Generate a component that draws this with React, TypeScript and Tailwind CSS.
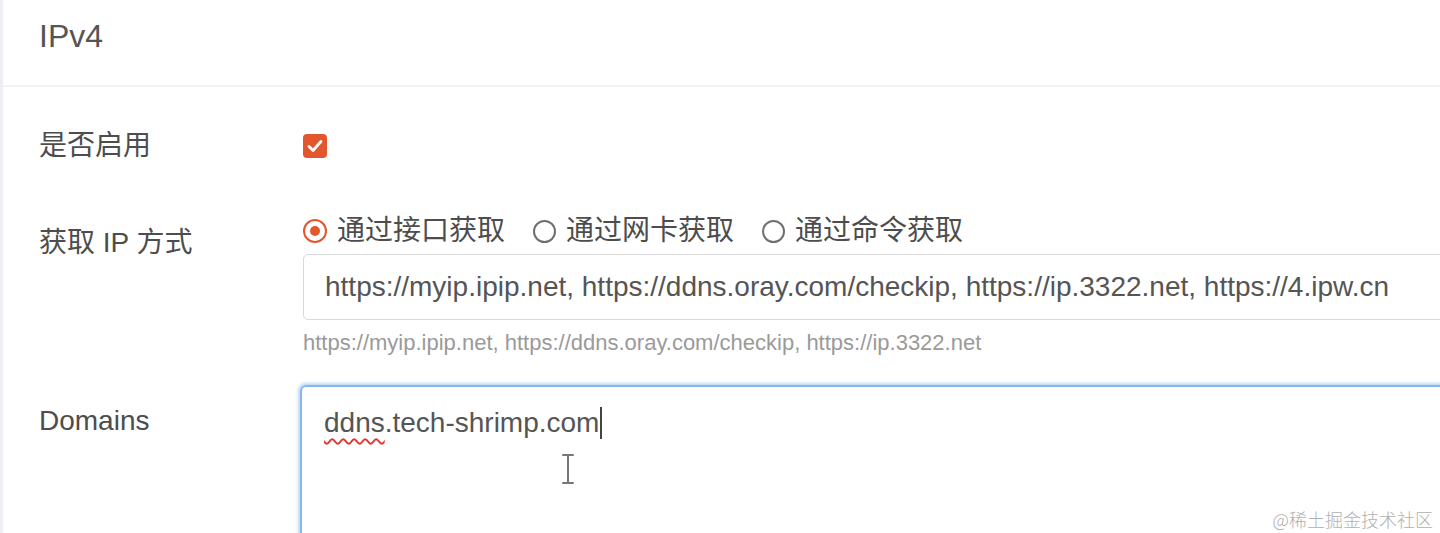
import React from 'react';

const font = { fontFamily: '"Liberation Sans", "Noto Sans CJK SC", sans-serif' };

function Radio({ checked, label }: { checked?: boolean; label: string }) {
  return (
    <label className="flex items-center gap-[10px]">
      {checked ? (
        <span className="w-[24px] h-[24px] rounded-full border-[2px] border-[#e4572e] flex items-center justify-center bg-white">
          <span className="w-[10px] h-[10px] rounded-full bg-[#e4572e]" />
        </span>
      ) : (
        <span className="w-[23px] h-[23px] rounded-full border-[2px] border-[#6f6f6f] bg-white" />
      )}
      <span className="text-[28px] leading-none text-[#4d4d4d]">{label}</span>
    </label>
  );
}

export default function App() {
  return (
    <div className="w-[1440px] h-[533px] overflow-hidden bg-white relative" style={font}>
      <div className="h-full border-l-[3px] border-[#eceef2]">
        {/* Header */}
        <div className="h-[87px] flex items-center pl-[36px] border-b-[2px] border-[#f2f3f5]">
          <h2 className="text-[32px] leading-none text-[#555] mt-[-14px]">IPv4</h2>
        </div>

        <div className="pl-[36px]">
          {/* Enable */}
          <div className="flex items-center h-[118px]">
            <div className="w-[264px] shrink-0 text-[28px] text-[#4d4d4d] leading-none">是否启用</div>
            <span className="w-[24px] h-[24px] rounded-[4px] bg-[#e4572e] flex items-center justify-center">
              <svg width="20" height="20" viewBox="0 0 20 20" fill="none">
                <path d="M4 10.5l4 4L16 5.5" stroke="white" strokeWidth="2.8" strokeLinecap="round" strokeLinejoin="round" />
              </svg>
            </span>
          </div>

          {/* IP method */}
          <div className="flex">
            <div className="w-[264px] shrink-0 text-[28px] text-[#4d4d4d] leading-none pt-[24px]">获取 IP 方式</div>
            <div className="flex-1">
              <div className="flex items-center gap-[28px] h-[34px] mt-[9px]">
                <Radio checked label="通过接口获取" />
                <Radio label="通过网卡获取" />
                <Radio label="通过命令获取" />
              </div>
              <div className="mt-[6px] h-[66px] w-[1160px] rounded-[5px] border border-[#d9d9d9] flex items-center pl-[21px] text-[28px] text-[#555] whitespace-nowrap">
                https://myip.ipip.net, https://ddns.oray.com/checkip, https://ip.3322.net, https://4.ipw.cn
              </div>
              <div className="mt-[12px] text-[22px] text-[#9a9a9a] leading-none">
                https://myip.ipip.net, https://ddns.oray.com/checkip, https://ip.3322.net
              </div>
            </div>
          </div>

          {/* Domains */}
          <div className="flex mt-[31px]">
            <div className="w-[261px] shrink-0 text-[28px] text-[#4d4d4d] leading-none pt-[22px]">Domains</div>
            <div className="relative w-[1160px] shrink-0 h-[180px] rounded-[6px] border-[2px] border-[#86b6f2] shadow-[0_0_3px_2px_rgba(140,185,240,0.55)] pl-[22px] pt-[20px]">
              <div className="flex items-center text-[28px] text-[#555] leading-none">
                <span className="underline decoration-wavy decoration-[#e0342c] decoration-[1.5px] underline-offset-[6px]">ddns</span>
                <span>.tech-shrimp.com</span>
                <span className="w-[2px] h-[32px] bg-[#444] ml-[1px]" />
              </div>
              <svg className="absolute left-[259px] top-[66px]" width="14" height="32" viewBox="0 0 14 32" fill="none">
                <path d="M2 2h10M7 2v28M2 30h10" stroke="#777" strokeWidth="2" strokeLinecap="round" />
              </svg>
            </div>
          </div>
        </div>
      </div>

      <div
        className="absolute right-[7px] bottom-[5px] text-[18px] text-[#b0b0b0] leading-none"
        style={{ fontFamily: '"Noto Sans CJK SC", "Liberation Sans", sans-serif', fontWeight: 300 }}
      >
        @稀土掘金技术社区
      </div>
    </div>
  );
}
